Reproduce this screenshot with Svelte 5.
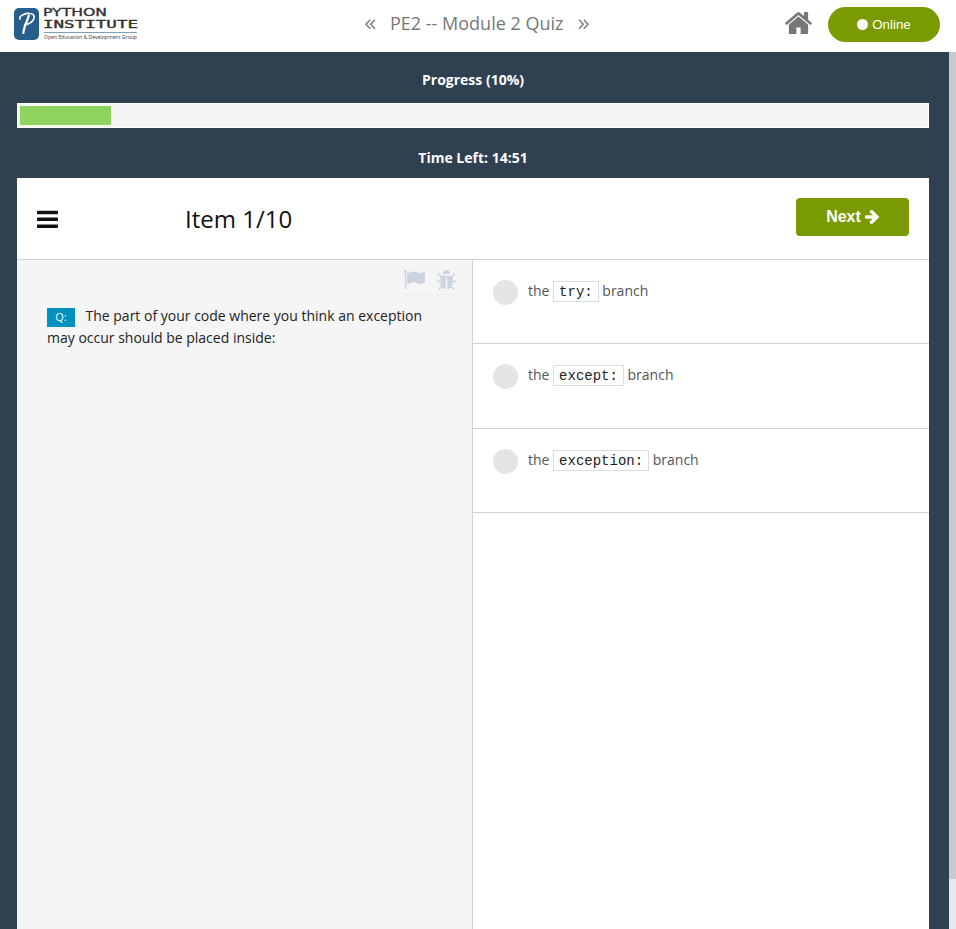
<script>
  const answers = ['try:', 'except:', 'exception:'];
  const progress = 10;
</script>

<div class="page">
  <header>
    <svg class="logo" width="126" height="36" viewBox="0 0 126 36" aria-label="Python Institute">
      <rect x="0" y="2" width="25" height="32" rx="5" fill="#285e8b" />
      <path d="M6 13 C4.500 9.500 12 7 16 7.500 C22.500 8 20.500 14.500 16 17 C14 18.200 12 18.600 10.500 18.500" fill="none" stroke="#fff" stroke-width="1.600" stroke-linecap="round" />
      <path d="M14.800 9.500 C13.500 15 10 20 9.300 27" fill="none" stroke="#fff" stroke-width="2.200" stroke-linecap="round" />
      <text class="brand" x="29" y="9.500" font-size="10.500" textLength="64" lengthAdjust="spacingAndGlyphs">PYTHON</text>
      <text class="brand mono" x="29" y="22" font-size="11" textLength="95" lengthAdjust="spacingAndGlyphs">INSTITUTE</text>
      <rect x="30" y="26" width="93" height="1" fill="#7c9fbb" />
      <text class="tag" x="30" y="33" font-size="5.300" textLength="93" lengthAdjust="spacingAndGlyphs">Open Education &amp; Development Group</text>
    </svg>
    <nav>
      <svg class="chevron" width="11" height="11" viewBox="0 0 11 11"><path d="M5.200.8 1 5.300l4.200 4.500M9.900.8 5.700 5.300l4.200 4.500" /></svg>
      <span class="title">PE2 -- Module 2 Quiz</span>
      <svg class="chevron" width="11" height="11" viewBox="0 0 11 11"><path d="m1.100.8 4.200 4.500-4.200 4.500M5.800.8 10 5.300 5.800 9.800" /></svg>
    </nav>
    <svg class="home" width="27" height="22" viewBox="89 250 1614 1286" preserveAspectRatio="none"><path d="M1472 992v480q0 26-19 45t-45 19h-384v-384h-256v384h-384q-26 0-45-19t-19-45v-480q0-1 .5-3t.5-3l575-474 575 474q1 2 1 6zm223-69l-62 74q-8 9-21 11h-3q-13 0-21-7l-692-577-692 577q-12 8-24 7-13-2-21-11l-62-74q-8-10-7-23.500t11-21.500l719-599q32-26 76-26t76 26l244 204v-195q0-14 9-23t23-9h192q14 0 23 9t9 23v408l219 182q10 8 11 21.500t-7 23.500z" /></svg>
    <button class="online"><i></i>Online</button>
  </header>

  <div class="body">
    <main>
      <h2>Progress ({progress}%)</h2>
      <div class="track"><div class="bar" style="width: {progress}%"></div></div>
      <h2 class="time">Time Left: 14:51</h2>
      <section class="card">
        <div class="head">
          <svg class="menu" width="21" height="18" viewBox="0 0 21 18"><rect y=".8" width="21" height="3.500" rx=".6" /><rect y="7.500" width="21" height="3.500" rx=".6" /><rect y="14.400" width="21" height="3.500" rx=".6" /></svg>
          <h1>Item 1/10</h1>
          <button class="next">Next
            <svg width="14" height="14" viewBox="128 190 1472 1550" preserveAspectRatio="none"><path d="M1600 960q0 54-37 91l-651 651q-39 37-91 37-51 0-90-37l-75-75q-38-38-38-91t38-91l293-293h-704q-52 0-84.500-37.500t-32.500-90.500v-128q0-53 32.500-90.500t84.500-37.500h704l-293-294q-38-36-38-90t38-90l75-75q38-38 90-38 53 0 91 38l651 651q37 35 37 90z" /></svg>
          </button>
        </div>
        <div class="columns">
          <div class="question">
            <div class="tools">
              <span class="flag"><svg width="21" height="19" viewBox="64 128 1728 1536" preserveAspectRatio="none"><path d="M320 256q0 72-64 110v1266q0 13-9.500 22.500t-22.500 9.500h-64q-13 0-22.500-9.500t-9.500-22.500v-1266q-64-38-64-110 0-53 37.500-90.500t90.500-37.500 90.500 37.500 37.500 90.500zm1472 64v763q0 25-12.500 38.500t-39.500 27.500q-215 116-369 116-61 0-123.500-22t-108.500-48-115.500-48-142.500-22q-192 0-464 146-17 9-33 9-26 0-45-19t-19-45v-742q0-32 31-55 21-14 79-43 236-120 421-120 107 0 200 29t219 88q38 19 88 19 54 0 117.500-21t110-47 88-47 54.500-21q26 0 45 19t19 45z" /></svg></span>
              <span class="bug"><svg width="19" height="20" viewBox="96 64 1600 1557" preserveAspectRatio="none"><path d="M1696 960q0 26-19 45t-45 19h-224q0 171-67 290l208 209q19 19 19 45t-19 45q-18 19-45 19t-45-19l-198-197q-5 5-15 13t-42 28.500-65 36.500-82 29-97 13v-896h-128v896q-51 0-101.500-13.500t-87-33-66-39-43.500-32.500l-15-14-183 207q-20 21-48 21-24 0-43-16-19-18-20.500-44.500t15.500-46.500l202-227q-58-114-58-274h-224q-26 0-45-19t-19-45 19-45 45-19h224v-294l-173-173q-19-19-19-45t19-45 45-19 45 19l173 173h844l173-173q19-19 45-19t45 19 19 45-19 45l-173 173v294h224q26 0 45 19t19 45zm-480-576h-640q0-133 93.500-226.500t226.500-93.500 226.500 93.500 93.500 226.500z" /></svg></span>
            </div>
            <p><span class="q">Q:</span>The part of your code where you think an exception may occur should be placed inside:</p>
          </div>
          <div class="answers">
            {#each answers as code}
              <div class="answer">
                <span class="radio"></span>
                <div class="label">the <code>{code}</code> branch</div>
              </div>
            {/each}
          </div>
        </div>
      </section>
    </main>
    <div class="scroll"><div class="thumb"></div></div>
  </div>
</div>

<style>
  .page, .page * { box-sizing: border-box; }
  .page { width: 956px; height: 929px; overflow: hidden; display: flex; flex-direction: column; background: #fff; font-family: "Open Sans", sans-serif; font-size: 14px; color: #222; }
  header { height: 52px; flex: none; display: flex; align-items: flex-start; padding: 0 16px 0 14px; }
  .logo { display: block; margin-top: 6px; overflow: visible; }
  .brand { font-family: "DejaVu Sans", sans-serif; font-weight: 400; fill: #333; stroke: #333; stroke-width: 0.35px; }
  .mono { font-family: "DejaVu Sans Mono", monospace; }
  .tag { font-family: "Open Sans", sans-serif; fill: #333; }
  nav { display: flex; margin: 11px 0 0 225px; font-size: 18px; line-height: 25px; color: #777; white-space: nowrap; }
  .chevron { margin-top: 8px; fill: none; stroke: #777; stroke-width: 1.4px; }
  .title { margin: 0 15px 0 14px; }
  .home { margin: 12px 16px 0 auto; fill: #777; }
  button { border: 0; padding: 0; color: #fff; background: #7a9a01; display: flex; align-items: center; justify-content: center; }
  .online { width: 112px; height: 35px; margin-top: 7px; border-radius: 18px; font: 13.3px "Liberation Sans", Arial, sans-serif; }
  .online i { width: 11px; height: 11px; border-radius: 50%; background: #fff; margin: 0 4px 0 0; }
  .body { flex: 1; display: flex; min-height: 0; background: #2f4050; }
  main { width: 949px; padding: 0 20px 0 17px; display: flex; flex-direction: column; }
  h2 { margin: 18px 0 0; height: 20px; line-height: 20px; font-size: 14px; font-weight: 700; text-align: center; color: #fff; }
  .track { height: 25px; margin-top: 13px; padding: 2px; border: 1px solid #fff; background: #f5f5f5; }
  .bar { height: 19px; background: #8ed45f; }
  .time { margin-top: 20px; }
  .card { flex: 1; margin-top: 10px; background: #fff; display: flex; flex-direction: column; }
  .head { height: 82px; border-bottom: 1px solid #d2d2d2; display: flex; align-items: flex-start; padding: 0 20px; }
  .menu { margin-top: 32px; fill: #111; }
  h1 { margin: 23px 0 0 127px; font-size: 24px; line-height: 36px; font-weight: 400; color: #111; }
  .next { width: 113px; height: 38px; margin: 20px 0 0 auto; border-radius: 4px; font: bold 16px "Liberation Sans", Arial, sans-serif; gap: 4px; }
  .next svg { fill: #fff; }
  .columns { flex: 1; display: flex; }
  .question { width: 456px; background: #f5f5f5; border-right: 1px solid #d2d2d2; }
  .tools { display: flex; justify-content: flex-end; gap: 5px; padding: 10px 15px 0 0; height: 45px; }
  .tools span { height: 25px; border-bottom: 1px dotted #e2e2e2; }
  .tools svg { display: block; fill: #ccd4df; }
  .flag { width: 28px; }
  .bug { width: 20px; }
  p { margin: 0 30px; line-height: 22px; color: #222; }
  .q { display: inline-block; width: 28px; height: 19px; line-height: 17px; margin-right: 10.500px; text-align: center; background: #0090bf; color: #fff; font-size: 11px; vertical-align: middle; }
  .answers { flex: 1; }
  .answer { height: 84.400px; border-bottom: 1px solid #d2d2d2; display: flex; gap: 10px; padding: 20px 20px 0; color: #555; }
  .radio { width: 25px; height: 25px; border-radius: 50%; background: #e4e4e4; }
  .label { line-height: 22px; }
  code { display: inline-block; height: 21px; line-height: 20px; padding: 0 5px; border: 1px solid #ddd; color: #222; background: #fff; font-family: "Liberation Mono", monospace; font-size: 14px; vertical-align: middle; margin-bottom: 2px; }
  .scroll { width: 7px; background: #e9e9e9; }
  .thumb { height: 827px; background: #cacaca; }
</style>
